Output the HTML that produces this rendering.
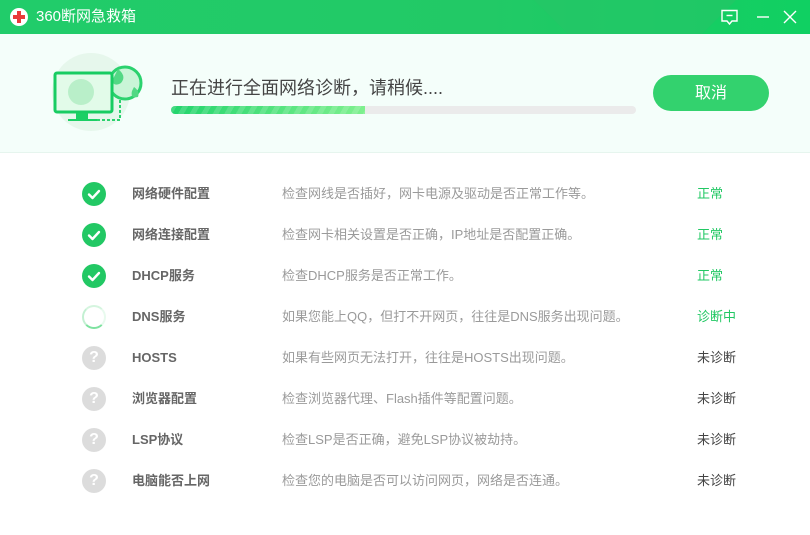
<!DOCTYPE html>
<html><head><meta charset="utf-8"><style>
*{margin:0;padding:0;box-sizing:border-box}
body{width:810px;height:535px;overflow:hidden;background:#fff;font-family:"Liberation Sans","Noto Sans CJK SC",sans-serif;position:relative}
.hdr{position:absolute;left:0;top:0;width:810px;height:34px;background:linear-gradient(90deg,#21cc6a 0%,#22c966 60%,#10d062 100%);overflow:hidden}
.hdr .tri{position:absolute;left:560px;top:-80px;width:150px;height:150px;background:#27c467;transform:rotate(45deg);opacity:.6}
.title{position:absolute;left:36px;top:0;line-height:34px;color:#fff;font-size:15px}
.logo{position:absolute;left:10px;top:8px;width:18px;height:18px;border-radius:50%;background:#fff}
.logo:before{content:"";position:absolute;left:7px;top:3px;width:4px;height:12px;background:#e93a3a}
.logo:after{content:"";position:absolute;left:3px;top:7px;width:12px;height:4px;background:#e93a3a}
.top{position:absolute;left:0;top:34px;width:810px;height:119px;background:#f4fefa;border-bottom:1px solid #e6f5ee}
.msg{position:absolute;left:171px;top:76px;line-height:24px;font-size:18px;color:#444}
.bar{position:absolute;left:171px;top:106px;width:465px;height:8px;border-radius:4px;background:#ebebeb;overflow:hidden}
.fill{width:194px;height:8px;background:repeating-linear-gradient(120deg,rgba(255,255,255,.15) 0 5px,transparent 5px 10px),linear-gradient(90deg,#22d46c,#7ef08e)}
.btn{position:absolute;left:653px;top:75px;width:116px;height:36px;border-radius:18px;background:#33d26e;color:#fff;font-size:16px;text-align:center;line-height:38px}
.row{position:absolute;left:0;height:24px;width:810px}
.ic{position:absolute;left:82px;top:0;width:24px;height:24px;border-radius:50%}
.ok{background:#22c864}
.q{background:#dcdcdc;color:#fff;font-weight:bold;font-size:16px;text-align:center;line-height:24px}
.sp{border:2px solid #eef;border-color:#d5f5df #e8faee #7ee2a0 #c3f0d2}
.nm,.ds,.st{position:absolute;top:0;line-height:24px;font-size:13px}
.nm{left:132px;font-weight:bold;color:#666}
.ds{left:282px;color:#9a9a9a}
.st{left:697px;color:#444}
.g{color:#22c864}
</style></head><body>
<div class="hdr"><div class="tri"></div><div class="logo"></div><div class="title">360断网急救箱</div>
<svg style="position:absolute;left:720px;top:9px" width="20" height="17" viewBox="0 0 20 17"><path d="M2 1.5H17V12H12L9.5 15L7 12H2Z" fill="none" stroke="#fff" stroke-width="1.4"/><path d="M6.5 6.5H12.5" stroke="#fff" stroke-width="1.4"/></svg>
<svg style="position:absolute;left:756px;top:10px" width="14" height="14"><path d="M1 7H13" stroke="#fff" stroke-width="1.4"/></svg>
<svg style="position:absolute;left:783px;top:10px" width="14" height="14"><path d="M1 1L13 13M13 1L1 13" stroke="#fff" stroke-width="1.4"/></svg>
</div>
<div class="top">
<svg style="position:absolute;left:50px;top:18px" width="100" height="85" viewBox="0 0 100 85">
<circle cx="41" cy="40" r="39" fill="#e6f7ec"/>
<circle cx="75" cy="31" r="16" fill="#c9f5d7" stroke="#2bd26e" stroke-width="3"/>
<path d="M68 17 Q77 24 71 31 Q64 35 62 29Z M84 35 Q90 39 88 45 Q80 47 82 39Z" fill="#52d884"/>
<rect x="5" y="21" width="57" height="39" rx="2" fill="#e2fbe9" stroke="#18cc62" stroke-width="3"/>
<circle cx="31" cy="40" r="13" fill="#b9efc9"/>
<path d="M26 61H38V67H26Z" fill="#1bcf64"/><path d="M18 67H48V69H18Z" fill="#1bcf64"/>
<path d="M47 68H70V48" fill="none" stroke="#2bd26e" stroke-width="2" stroke-dasharray="3 2"/>
</svg>
</div>
<div class="msg">正在进行全面网络诊断，请稍候....</div>
<div class="bar"><div class="fill"></div></div>
<div class="btn">取消</div>

<div class="row" style="top:182px"><div class="ic ok"><svg width="24" height="24"><path d="M7 12.5L10.5 16L17 9" fill="none" stroke="#fff" stroke-width="2.4" stroke-linecap="round" stroke-linejoin="round"/></svg></div><div class="nm">网络硬件配置</div><div class="ds">检查网线是否插好，网卡电源及驱动是否正常工作等。</div><div class="st g">正常</div></div>
<div class="row" style="top:223px"><div class="ic ok"><svg width="24" height="24"><path d="M7 12.5L10.5 16L17 9" fill="none" stroke="#fff" stroke-width="2.4" stroke-linecap="round" stroke-linejoin="round"/></svg></div><div class="nm">网络连接配置</div><div class="ds">检查网卡相关设置是否正确，IP地址是否配置正确。</div><div class="st g">正常</div></div>
<div class="row" style="top:264px"><div class="ic ok"><svg width="24" height="24"><path d="M7 12.5L10.5 16L17 9" fill="none" stroke="#fff" stroke-width="2.4" stroke-linecap="round" stroke-linejoin="round"/></svg></div><div class="nm">DHCP服务</div><div class="ds">检查DHCP服务是否正常工作。</div><div class="st g">正常</div></div>
<div class="row" style="top:305px"><div class="ic sp"></div><div class="nm">DNS服务</div><div class="ds">如果您能上QQ，但打不开网页，往往是DNS服务出现问题。</div><div class="st g">诊断中</div></div>
<div class="row" style="top:346px"><div class="ic q">?</div><div class="nm">HOSTS</div><div class="ds">如果有些网页无法打开，往往是HOSTS出现问题。</div><div class="st">未诊断</div></div>
<div class="row" style="top:387px"><div class="ic q">?</div><div class="nm">浏览器配置</div><div class="ds">检查浏览器代理、Flash插件等配置问题。</div><div class="st">未诊断</div></div>
<div class="row" style="top:428px"><div class="ic q">?</div><div class="nm">LSP协议</div><div class="ds">检查LSP是否正确，避免LSP协议被劫持。</div><div class="st">未诊断</div></div>
<div class="row" style="top:469px"><div class="ic q">?</div><div class="nm">电脑能否上网</div><div class="ds">检查您的电脑是否可以访问网页，网络是否连通。</div><div class="st">未诊断</div></div>
</body></html>
